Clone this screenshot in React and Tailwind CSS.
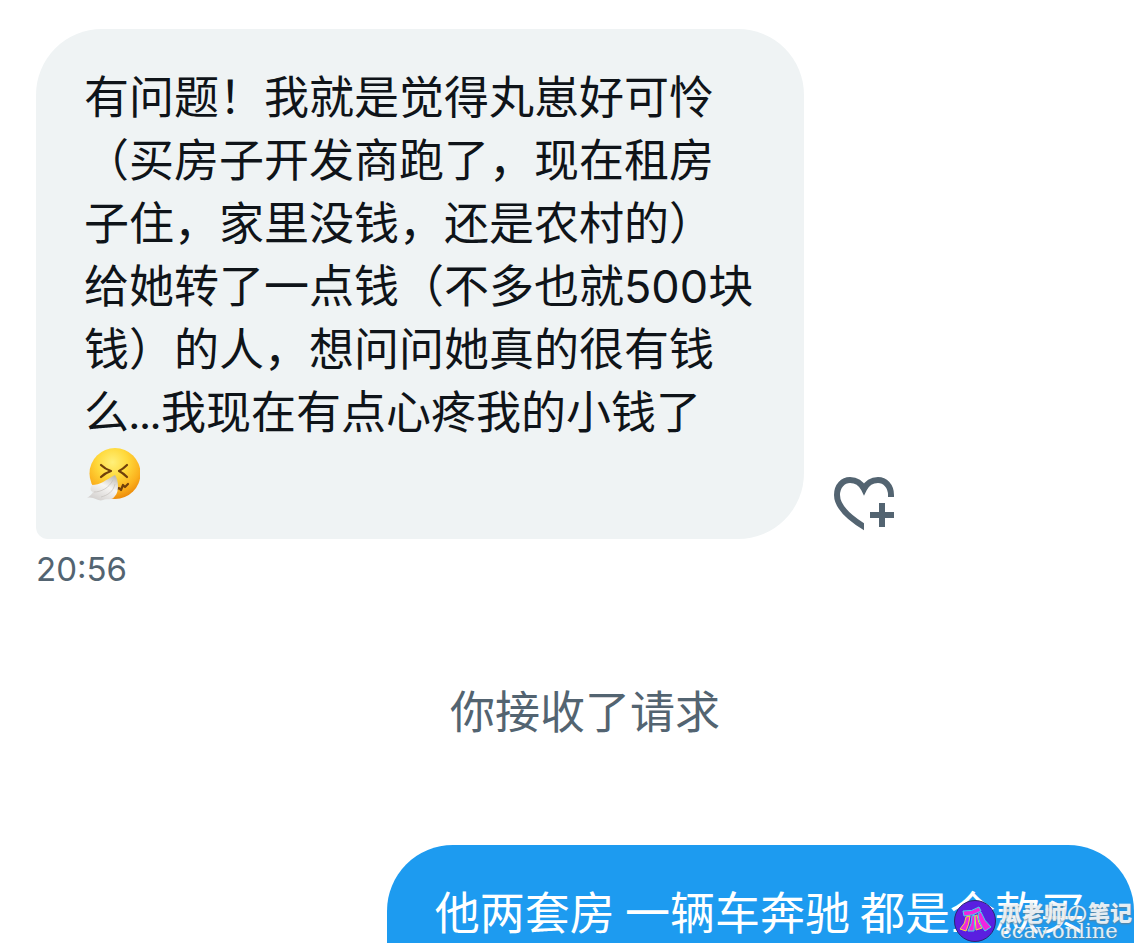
import React from 'react';

const incoming = [
    '有问题！我就是觉得丸崽好可怜',
    '（买房子开发商跑了，现在租房',
    '子住，家里没钱，还是农村的）',
    '给她转了一点钱（不多也就500块',
    '钱）的人，想问问她真的很有钱',
];

const SneezeFace = () => (
    <svg viewBox="-2 0 56 56" className="block h-14 w-14" role="img" aria-label="Sneezing face">
        <defs>
            <radialGradient id="face" cx="0.45" cy="0.28" r="0.75">
                <stop offset="0" stopColor="#fff07a" />
                <stop offset="0.4" stopColor="#ffd93b" />
                <stop offset="0.75" stopColor="#fbb01d" />
                <stop offset="1" stopColor="#e98408" />
            </radialGradient>
            <linearGradient id="tissue" x1="0.9" y1="0" x2="0.3" y2="1">
                <stop offset="0" stopColor="#b9b4ad" />
                <stop offset="0.45" stopColor="#f7f6f4" />
                <stop offset="1" stopColor="#d3d0ce" />
            </linearGradient>
        </defs>
        <circle cx="29" cy="25.5" r="25.5" fill="url(#face)" />
        <g fill="none" stroke="#70400b" strokeWidth="2.2" strokeLinecap="round" strokeLinejoin="round">
            <path d="M15 17 Q19 21 25 23 Q19 25 15 29" />
            <path d="M41 17 Q37 21 33 23 Q37 25 41 29" />
            <path d="M31 41 L33 40 L35 42 L37 37 L39 39 L42 36" />
        </g>
        <path d="M29 27 C33 33 33 44 29 48 C26 53 21 50 17 52 C12 54 8 48 1 50 C4 48 6 46 7 44 C4 43 4 40 6 37 C14 37 20 32 29 27Z" fill="url(#tissue)" />
        <path d="M27 32 C23 40 15 44 8 44 M29 36 C27 44 22 47 15 49" fill="none" stroke="#c4c0bb" strokeWidth="0.7" />
    </svg>
);

const HeartPlus = () => (
    <svg viewBox="0 0 60 54" className="block h-[54px] w-[60px]" fill="none" stroke="currentColor" strokeWidth="6" aria-hidden="true">
        <clipPath id="heart-cut">
            <path d="M0 0H60V20H30V54H0Z" />
        </clipPath>
        <path clipPath="url(#heart-cut)" d="M57 22V18C57 9 51 3 44 3C38 3 33 6 30 12C27 6 22 3 16 3C9 3 3 9 3 18C3 28 12 39 32 51" />
        <path d="M48 26V50M36 38H60" />
    </svg>
);

const Watermark = () => (
    <div className="absolute right-[14px] bottom-px flex items-center gap-1">
        <svg viewBox="0 0 42 42" className="h-[42px] w-[42px]" aria-hidden="true">
            <circle cx="21" cy="21" r="20.5" fill="#5a1fe0" stroke="#2a2470" />
            <g fill="#f024e0" strokeLinejoin="round">
                <path d="M9 11Q18 12 25 7L27 11Q19 16 10 16Z" stroke="#48d8e8" />
                <path d="M12 17L16 16Q15 25 12 31L6 29Q12 23 12 17Z" stroke="#f4e13c" />
                <path d="M18 16L21 15L20 31L14 31Q18 24 18 16Z" stroke="#48d8e8" />
                <path d="M21 16L23 15Q24 23 28 28L22 30Z" stroke="#f4e13c" />
                <path d="M24 14L27 12Q30 21 37 27L31 31Q25 24 24 14Z" stroke="#48d8e8" />
            </g>
        </svg>
        <div className="text-white/85 [text-shadow:0_1px_2px_#5f7f95]">
            <p className="font-['Noto_Sans_CJK_SC',sans-serif] text-[22px] leading-5 font-black">
                瓜老师<span className="font-normal">の</span>笔记
            </p>
            <p className="font-['DejaVu_Serif',serif] text-[21px] leading-5 font-light">ccav.online</p>
        </div>
    </div>
);

const App = () => {
    return (
        <main className="relative flex h-screen flex-col overflow-hidden bg-white pt-[29px] pr-3 pl-9 font-['Inter','Noto_Sans_CJK_SC',sans-serif] text-[45px] leading-[63px] text-[#0f1419]">
            {/* Received message */}
            <div className="flex shrink-0 items-end gap-[30px]">
                <div className="rounded-[66px] rounded-bl-xl bg-[#eff3f4] pt-[37px] pr-[51px] pb-8 pl-12">
                    {incoming.map((line) => (
                        <p key={line} className="whitespace-nowrap">{line}</p>
                    ))}
                    <p className="whitespace-nowrap">
                        么<span className="font-['Lato',sans-serif]">...</span>我现在有点心疼我的小钱了
                    </p>
                    <div className="flex h-[63px] items-center">
                        <SneezeFace />
                    </div>
                </div>
                <button type="button" aria-label="Add reaction" className="mb-2 text-[#536471]">
                    <HeartPlus />
                </button>
            </div>
            <time className="mt-2 shrink-0 text-[33px] leading-[44px] text-[#536471]">20:56</time>

            <p className="mt-[90px] shrink-0 text-center text-[#536471]">你接收了请求</p>

            {/* Sent message, runs on below the fold */}
            <div className="mt-[101px] ml-auto shrink-0 rounded-[66px] rounded-br-xl bg-[#1d9bf0] pt-[34px] pr-[49px] pb-24 pl-12 font-['Noto_Sans_CJK_SC',sans-serif] text-white">
                <p className="whitespace-nowrap">他两套房 一辆车奔驰 都是全款买</p>
            </div>

            <Watermark />
        </main>
    );
};

export default App;
